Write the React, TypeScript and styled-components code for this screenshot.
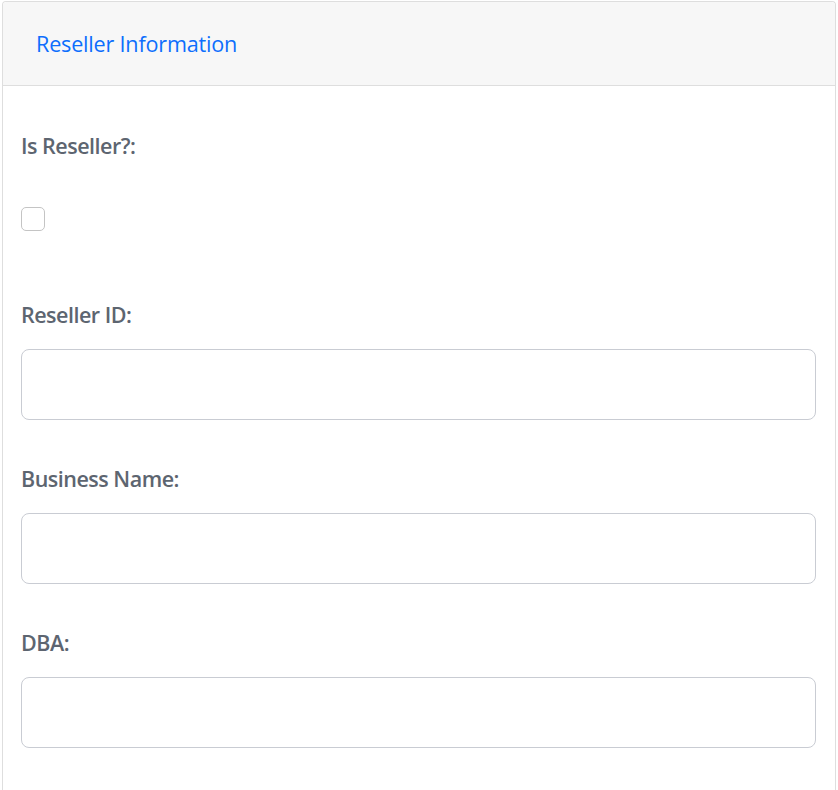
import React from "react";
import styled, { createGlobalStyle } from "styled-components";

const GlobalStyle = createGlobalStyle`
  html, body {
    margin: 0;
    padding: 0;
    background: #ffffff;
    font-family: "Open Sans", "Noto Sans", sans-serif;
  }
`;

const Card = styled.div`
  margin: 1px 2px 0 2px;
  border: 1px solid #dedede;
  border-bottom: none;
  border-radius: 4px 4px 0 0;
  background: #ffffff;
  min-height: 800px;
`;

const CardHeader = styled.div`
  height: 83px;
  display: flex;
  align-items: center;
  padding: 0 33px;
  background: #f7f7f7;
  border-bottom: 1px solid #dedede;
  border-radius: 4px 4px 0 0;
`;

const Title = styled.h2`
  margin: 0;
  font-size: 21.6px;
  font-weight: 400;
  color: #0d6efd;
  letter-spacing: -0.2px;
`;

const CardBody = styled.div`
  padding: 45px 19px 0 18px;
  display: flex;
  flex-direction: column;
`;

const Field = styled.div<{ $gap: number; $after: number }>`
  display: flex;
  flex-direction: column;
  align-items: flex-start;
  gap: ${(p) => p.$gap}px;
  margin-bottom: ${(p) => p.$after}px;
`;

const Label = styled.label`
  font-size: 21.5px;
  line-height: 30px;
  font-weight: 600;
  color: #5d6570;
  letter-spacing: -0.5px;
`;

const Checkbox = styled.input.attrs({ type: "checkbox" })`
  appearance: none;
  margin: 0;
  width: 24px;
  height: 24px;
  border: 1px solid #c4c4c4;
  border-radius: 5px;
  background: #ffffff;
`;

const TextInput = styled.input`
  box-sizing: border-box;
  width: 100%;
  height: 71px;
  border: 1px solid #c9ccd3;
  border-radius: 8px;
  background: #ffffff;
  font-size: 20px;
  padding: 0 14px;
`;

export default function App() {
  return (
    <>
      <GlobalStyle />
      <Card>
        <CardHeader>
          <Title>Reseller Information</Title>
        </CardHeader>
        <CardBody>
          <Field $gap={46} $after={69}>
            <Label>Is Reseller?:</Label>
            <Checkbox />
          </Field>
          <Field $gap={19} $after={44}>
            <Label>Reseller ID:</Label>
            <TextInput />
          </Field>
          <Field $gap={19} $after={44}>
            <Label>Business Name:</Label>
            <TextInput />
          </Field>
          <Field $gap={19} $after={44}>
            <Label>DBA:</Label>
            <TextInput />
          </Field>
        </CardBody>
      </Card>
    </>
  );
}
